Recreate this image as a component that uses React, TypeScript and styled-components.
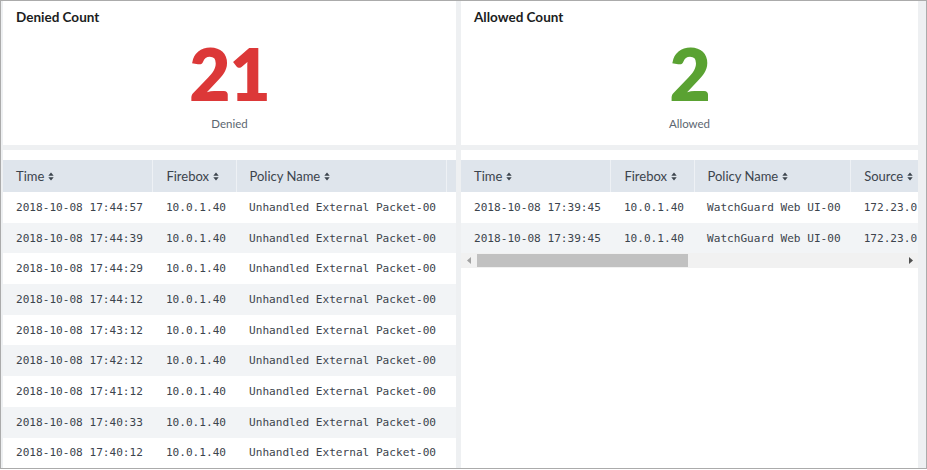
import React from "react";
import styled, { createGlobalStyle } from "styled-components";

const GlobalStyle = createGlobalStyle`
  html, body { margin: 0; padding: 0; background: #ffffff; }
  body { font-family: Lato, "Open Sans", sans-serif; }
`;

const Dashboard = styled.div`
  box-sizing: border-box;
  width: 927px;
  height: 469px;
  border: 1px solid #ababab;
  background: #eef0f2;
  padding-left: 2px;
  display: grid;
  grid-template-columns: 453px 457px;
  grid-template-rows: 144px 1fr;
  gap: 5px;
`;

const Panel = styled.section`
  background: #ffffff;
  overflow: hidden;
  min-width: 0;
  min-height: 0;
`;

const StatPanel = styled(Panel)`
  display: flex;
  flex-direction: column;
  padding: 8px 13px 0;
`;

const PanelTitle = styled.h2`
  margin: 0;
  font: 700 13.5px/16px Lato, sans-serif;
  color: #1b1d21;
`;

const BigValue = styled.div<{ $color: string }>`
  margin-top: 14px;
  text-align: center;
  font: 800 71px/70px Lato, sans-serif;
  letter-spacing: -1px;
  color: ${(p) => p.$color};
`;

const ValueCaption = styled.div`
  margin-top: 8px;
  text-align: center;
  font: 400 11.5px/14px Lato, sans-serif;
  color: #5c6670;
`;

const TablePanel = styled(Panel)`
  padding-top: 10px;
  display: flex;
  flex-direction: column;
`;

const TableClip = styled.div`
  overflow: hidden;
`;

const DataTable = styled.table`
  border-collapse: collapse;
  border-spacing: 0;
  white-space: nowrap;
`;

const HeadCell = styled.th`
  height: 32px;
  padding: 0 10px 0 13px;
  text-align: left;
  background: #dfe5ec;
  font: 400 13px Lato, sans-serif;
  color: #3c444d;
  border-left: 1px solid #eef1f5;
  &:first-child {
    border-left: none;
  }
`;

const HeadLabel = styled.span`
  display: inline-flex;
  align-items: center;
  gap: 4px;
`;

const Row = styled.tr`
  height: 30.7px;
  &:nth-child(even) {
    background: #f2f4f6;
  }
`;

const Cell = styled.td`
  padding: 0 10px 0 13px;
  font: 400 11.1px "DejaVu Sans Mono", monospace;
  color: #3c444d;
`;

const ScrollTrack = styled.div`
  display: flex;
  align-items: center;
  height: 15px;
  background: #f1f1f1;
`;

const ScrollArrow = styled.div`
  width: 15px;
  height: 15px;
  flex: none;
  display: flex;
  align-items: center;
  justify-content: center;
`;

const ScrollRail = styled.div`
  flex: 1;
  height: 100%;
  display: flex;
  align-items: center;
`;

const ScrollThumb = styled.div`
  height: 13px;
  margin-left: 1px;
  background: #c1c1c1;
`;

const SortIcon = () => (
  <svg width="6" height="9" viewBox="0 0 6 9" aria-hidden="true">
    <polygon points="0.3,3.7 3,0.6 5.7,3.7" fill="#3c444d" />
    <polygon points="0.3,5.3 3,8.4 5.7,5.3" fill="#3c444d" />
  </svg>
);

const Arrow = ({ dir, color }: { dir: "left" | "right"; color: string }) => (
  <svg width="4" height="7" viewBox="0 0 4 7" aria-hidden="true">
    <polygon points={dir === "left" ? "4,0 0,3.5 4,7" : "0,0 4,3.5 0,7"} fill={color} />
  </svg>
);

type Rec = string[];

const columns = ["Time", "Firebox", "Policy Name", "Source", "Destination", "Protocol"];

const denied: Rec[] = [
  "17:44:57",
  "17:44:39",
  "17:44:29",
  "17:44:12",
  "17:43:12",
  "17:42:12",
  "17:41:12",
  "17:40:33",
  "17:40:12",
].map((t) => [`2018-10-08 ${t}`, "10.0.1.40", "Unhandled External Packet-00", "203.0.113.25", "10.0.1.40", "tcp"]);

const allowed: Rec[] = [
  ["2018-10-08 17:39:45", "10.0.1.40", "WatchGuard Web UI-00", "172.23.0.12", "10.0.1.40", "https/tcp"],
  ["2018-10-08 17:39:45", "10.0.1.40", "WatchGuard Web UI-00", "172.23.0.12", "10.0.1.40", "https/tcp"],
];

const EventTable = ({ rows }: { rows: Rec[] }) => (
  <TableClip>
    <DataTable>
      <thead>
        <tr>
          {columns.map((c) => (
            <HeadCell key={c}>
              <HeadLabel>
                {c}
                <SortIcon />
              </HeadLabel>
            </HeadCell>
          ))}
        </tr>
      </thead>
      <tbody>
        {rows.map((r, i) => (
          <Row key={i}>
            {r.map((v, j) => (
              <Cell key={j}>{v}</Cell>
            ))}
          </Row>
        ))}
      </tbody>
    </DataTable>
  </TableClip>
);

export default function App() {
  const thumbWidth = 211;
  return (
    <>
      <GlobalStyle />
      <Dashboard>
        <StatPanel>
          <PanelTitle>Denied Count</PanelTitle>
          <BigValue $color="#dc3838">21</BigValue>
          <ValueCaption>Denied</ValueCaption>
        </StatPanel>
        <StatPanel>
          <PanelTitle>Allowed Count</PanelTitle>
          <BigValue $color="#5aa232">2</BigValue>
          <ValueCaption>Allowed</ValueCaption>
        </StatPanel>
        <TablePanel>
          <EventTable rows={denied} />
        </TablePanel>
        <TablePanel>
          <EventTable rows={allowed} />
          <ScrollTrack>
            <ScrollArrow>
              <Arrow dir="left" color="#a3a3a3" />
            </ScrollArrow>
            <ScrollRail>
              <ScrollThumb style={{ width: thumbWidth }} />
            </ScrollRail>
            <ScrollArrow>
              <Arrow dir="right" color="#505050" />
            </ScrollArrow>
          </ScrollTrack>
        </TablePanel>
      </Dashboard>
    </>
  );
}
